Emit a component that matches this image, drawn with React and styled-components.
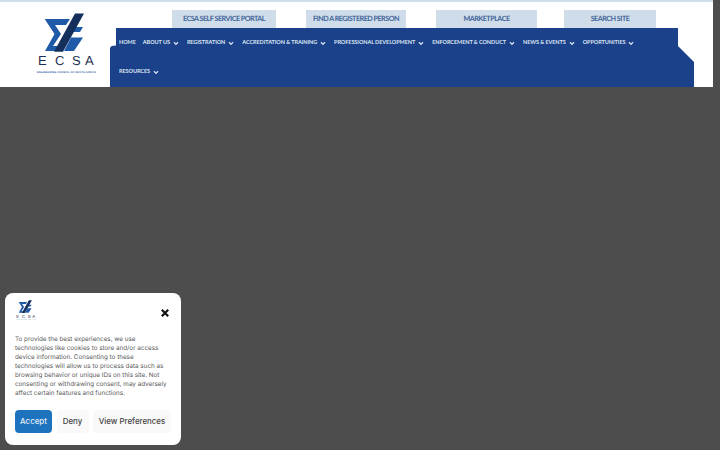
import React from "react";
import styled, { createGlobalStyle } from "styled-components";

const Global = createGlobalStyle`
  html, body { margin: 0; padding: 0; background: #4d4d4d; }
  body { width: 720px; height: 450px; overflow: hidden; font-family: "Open Sans", "Liberation Sans", sans-serif; text-rendering: geometricPrecision; }
`;
const Page = styled.div`
  width: 720px; height: 450px; display: flex; flex-direction: column; justify-content: space-between; overflow: hidden;
`;
const Header = styled.header`
  width: 713px; height: 86.5px; box-sizing: border-box; background: #fff; border-top: 2px solid #cfdeec;
  display: flex;
`;
const LogoCell = styled.div`
  width: 110px; flex: none; padding: 11px 0 0 34px; box-sizing: border-box;
`;
const Main = styled.div`
  flex: 1; display: flex; flex-direction: column; padding-top: 8px; min-width: 0;
`;
const Tabs = styled.div`
  height: 18px; flex: none; display: flex; padding-left: 62px; gap: 30px;
`;
const Tab = styled.a`
  width: ${p => p.$w}px; margin-right: ${p => p.$mr || 0}px; background: #cfdcea; color: #3f6499;
  font: 700 7.2px/18px Lato, "Open Sans", sans-serif; letter-spacing: -.5px; text-align: center; white-space: nowrap;
`;
const Nav = styled.nav`
  width: 584px; height: 58.5px; flex: none; background: #1b418b; box-sizing: border-box;
  padding: 1px 0 0 9px;
  clip-path: polygon(6px 0, 568px 0, 568px 18px, 584px 34px, 584px 59px, 0 59px, 0 20px, 1.5px 18px, 6px 17.5px);
`;
const NavInner = styled.div`
  width: 530px; display: flex; flex-wrap: wrap;
`;
const Item = styled.a`
  height: 29px; display: flex; align-items: center; gap: ${p => (p.$plain ? 0 : 2)}px; margin-right: ${p => (p.$plain ? 7 : 8)}px;
  color: #dbe4f1; font: 700 5.5px/29px Lato, "Open Sans", sans-serif; letter-spacing: -.06px; white-space: nowrap;
`;
const Chev = styled.svg`
  width: 6px; height: 5px; margin: -1px 0 0 1px; flex: none;
`;
const Bottom = styled.div`
  padding: 0 0 5px 5px;
`;
const Card = styled.section`
  width: 176px; height: 152.5px; box-sizing: border-box; background: #fff; border-radius: 8px;
  padding: 7px 10px 0; display: flex; flex-direction: column;
`;
const CardHead = styled.div`
  height: 31px; display: flex; justify-content: space-between; align-items: flex-start;
`;
const Close = styled.svg`
  width: 10px; height: 10px; margin: 8px 1px 0 0;
`;
const Copy = styled.p`
  margin: 4px 0 0; color: #5c5c5c; font: 400 6.3px/9px Inter, "Open Sans", sans-serif; white-space: pre;
`;
const Actions = styled.div`
  display: flex; gap: 4.5px; margin-top: 12.5px;
`;
const Btn = styled.button`
  height: 22.5px; border: 0; border-radius: 4px; padding: 0; flex: none;
  width: ${p => p.$w}px; background: ${p => (p.$primary ? "#1e73be" : "#f9f9f9")};
  color: ${p => (p.$primary ? "#e3eef8" : "#444")};
  font: 500 7.9px/22.5px Inter, "Open Sans", sans-serif;
`;

function Logo({ w }) {
  return (
    <svg width={w} viewBox="0 0 62 62" style={{ display: "block" }}>
      <polygon points="10.7,6 36,6 32,12 21,12 27,21 19,33 27,33 24,38 11,38 20.5,21" fill="#1f5aa8" />
      <polygon points="37,14 49,14 46,19 33.5,19" fill="#1f5aa8" />
      <polygon points="37,24.5 49,24.5 40,38 30,38" fill="#1f5aa8" />
      <polygon points="41,0.5 50,0.5 29,38.7 20,38.7" fill="#152f5c" />
      <text x="4 21 38 51" y="52" fill="#1d2f52" fontFamily="Liberation Sans" fontSize="13">ECSA</text>
      <text x="3" y="59.5" fill="#2c5fa6" fontFamily="Liberation Sans" fontWeight="700" fontSize="2.6" textLength="59">ENGINEERING COUNCIL OF SOUTH AFRICA</text>
    </svg>
  );
}
const Chevron = () => (
  <Chev viewBox="0 0 6 5"><path d="M1 1.2 3 3.4 5 1.2" fill="none" stroke="#dbe4f1" strokeWidth="1.3" /></Chev>
);
const nav = ["ABOUT US", "REGISTRATION", "ACCREDITATION & TRAINING", "PROFESSIONAL DEVELOPMENT", "ENFORCEMENT & CONDUCT", "NEWS & EVENTS", "OPPORTUNITIES", "RESOURCES"];

export default function App() {
  return (
    <Page>
      <Global />
      <Header>
        <LogoCell><Logo w={62} /></LogoCell>
        <Main>
          <Tabs>
            <Tab $w={104}>ECSA SELF SERVICE PORTAL</Tab>
            <Tab $w={100}>FIND A REGISTERED PERSON</Tab>
            <Tab $w={101} $mr={-3}>MARKETPLACE</Tab>
            <Tab $w={92}>SEARCH SITE</Tab>
          </Tabs>
          <Nav>
            <NavInner>
              <Item $plain>HOME</Item>
              {nav.map(n => <Item key={n}>{n}<Chevron /></Item>)}
            </NavInner>
          </Nav>
        </Main>
      </Header>
      <Bottom>
        <Card>
          <CardHead>
            <Logo w={21} />
            <Close viewBox="0 0 10 10"><path d="M1.8 1.8 8.2 8.2M8.2 1.8 1.8 8.2" stroke="#111" strokeWidth="2.2" /></Close>
          </CardHead>
          <Copy>{`To provide the best experiences, we use
technologies like cookies to store and/or access
device information. Consenting to these
technologies will allow us to process data such as
browsing behavior or unique IDs on this site. Not
consenting or withdrawing consent, may adversely
affect certain features and functions.`}</Copy>
          <Actions>
            <Btn $primary $w={37}>Accept</Btn>
            <Btn $w={32}>Deny</Btn>
            <Btn $w={78}>View Preferences</Btn>
          </Actions>
        </Card>
      </Bottom>
    </Page>
  );
}
